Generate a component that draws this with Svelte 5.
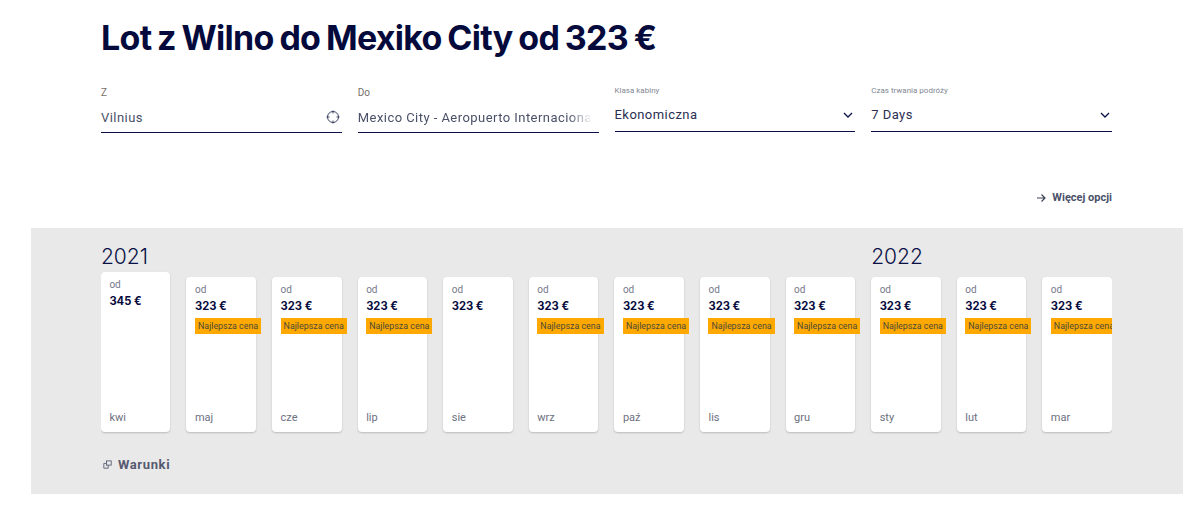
<script>
	const months = [
		{ name: 'kwi', price: 345, best: false, year: '2021' },
		{ name: 'maj', price: 323, best: true },
		{ name: 'cze', price: 323, best: true },
		{ name: 'lip', price: 323, best: true },
		{ name: 'sie', price: 323, best: false },
		{ name: 'wrz', price: 323, best: true },
		{ name: 'paź', price: 323, best: true },
		{ name: 'lis', price: 323, best: true },
		{ name: 'gru', price: 323, best: true },
		{ name: 'sty', price: 323, best: true, year: '2022' },
		{ name: 'lut', price: 323, best: true },
		{ name: 'mar', price: 323, best: true }
	];
</script>

<main class="page">
	<h1 class="title">Lot z Wilno do Mexiko City od 323 €</h1>

	<div class="filters">
		<div class="field text-field">
			<span class="label">Z</span>
			<div class="value muted">
				<span>Vilnius</span>
				<svg class="locate" width="14" height="14" viewBox="0 0 14 14" fill="none" stroke="#2c3357" stroke-width="0.9">
					<circle cx="7" cy="7" r="5.5" />
					<path d="M7 0.5v3M7 10.5v3M0.5 7h3M10.5 7h3" />
				</svg>
			</div>
		</div>
		<div class="field text-field">
			<span class="label">Do</span>
			<div class="value muted">
				<span class="fade">Mexico City - Aeropuerto Internacional</span>
			</div>
		</div>
		<div class="field select-field">
			<span class="label small">Klasa kabiny</span>
			<div class="value">
				<span>Ekonomiczna</span>
				<svg width="10" height="6" viewBox="0 0 10 6" fill="none" stroke="#0a1147" stroke-width="1.3">
					<path d="M1 1l4 4 4-4" />
				</svg>
			</div>
		</div>
		<div class="field select-field">
			<span class="label small">Czas trwania podróży</span>
			<div class="value">
				<span>7 Days</span>
				<svg width="10" height="6" viewBox="0 0 10 6" fill="none" stroke="#0a1147" stroke-width="1.3">
					<path d="M1 1l4 4 4-4" />
				</svg>
			</div>
		</div>
	</div>

	<div class="more">
		<svg width="10" height="10" viewBox="0 0 10 10" fill="none" stroke="#3c4258" stroke-width="1.2">
			<path d="M1 5h8M5.5 1.5L9 5 5.5 8.5" />
		</svg>
		<span>Więcej opcji</span>
	</div>

	<section class="band">
		<div class="calendar">
			{#each months as m}
				<div class="column">
					<div class="year">{m.year ?? ''}</div>
					<div class="card" class:first={m.year === '2021'}>
						<span class="od">od</span>
						<strong class="price">{m.price} €</strong>
						{#if m.best}
							<span class="badge">Najlepsza cena</span>
						{/if}
						<span class="month">{m.name}</span>
					</div>
				</div>
			{/each}
		</div>
		<div class="terms">
			<svg width="9" height="9" viewBox="0 0 9 9" fill="none" stroke="#4a5068" stroke-width="0.8">
				<rect x="3.4" y="0.9" width="4.8" height="4.2" />
				<path d="M3.4 3.4H0.8v4.8h4.4V5.1" />
			</svg>
			<span>Warunki</span>
		</div>
	</section>
</main>

<style>
	:global(body) {
		margin: 0;
		background: #fff;
	}
	.page {
		width: 1202px;
		height: 505px;
		overflow: hidden;
		font-family: Roboto, sans-serif;
		color: #0a1147;
	}
	.title {
		margin: 0;
		padding: 17px 0 0 101px;
		font-family: Inter, sans-serif;
		font-size: 34px;
		line-height: 42px;
		font-weight: 700;
		letter-spacing: -0.7px;
		word-spacing: -1.7px;
		color: #050a3c;
	}
	.filters {
		display: grid;
		grid-template-columns: repeat(4, minmax(0, 1fr));
		gap: 16px;
		width: 1011px;
		margin: 28px 0 0 101px;
		align-items: start;
	}
	.field {
		display: flex;
		flex-direction: column;
		min-width: 0;
	}
	.label {
		font-size: 10px;
		line-height: 12px;
		color: #77706a;
	}
	.label.small {
		font-size: 8px;
		color: #7f8894;
	}
	.text-field .value {
		margin-top: 8px;
		height: 26px;
	}
	.select-field {
		margin-top: -2px;
	}
	.select-field .value {
		margin-top: 6px;
		height: 29px;
	}
	.value {
		display: flex;
		align-items: center;
		justify-content: space-between;
		box-sizing: border-box;
		padding: 0 2px 5px 0;
		border-bottom: 1px solid #0a1147;
		font-size: 13px;
		letter-spacing: 0.45px;
		color: #2b2f52;
	}
	.value.muted {
		color: #4a5068;
	}
	.fade {
		white-space: nowrap;
		overflow: hidden;
		width: 100%;
		margin-right: 5px;
		-webkit-mask-image: linear-gradient(to right, #000 90%, transparent);
		mask-image: linear-gradient(to right, #000 90%, transparent);
	}
	.more {
		display: flex;
		justify-content: flex-end;
		align-items: center;
		gap: 6px;
		width: 1011px;
		margin: 57px 0 0 101px;
		font-size: 11px;
		line-height: 16px;
		font-weight: 700;
		color: #4a5068;
	}
	.band {
		width: 1152px;
		height: 266px;
		margin: 22px 0 0 31px;
		box-sizing: border-box;
		padding: 16px 0 0 69.9px;
		background: #e9e9e9;
	}
	.calendar {
		display: grid;
		grid-template-columns: repeat(12, minmax(0, 1fr));
		gap: 16px;
		width: 1011px;
		overflow: hidden;
		padding-bottom: 4px;
	}
	.column {
		min-width: 0;
	}
	.year {
		height: 33px;
		font-family: Inter, sans-serif;
		font-size: 21px;
		line-height: 26px;
		font-weight: 300;
		white-space: nowrap;
		color: #0a1147;
	}
	.card {
		display: flex;
		flex-direction: column;
		box-sizing: border-box;
		height: 155px;
		padding: 6px 8px 0 8.5px;
		background: #fff;
		border-radius: 4px;
		box-shadow: 0 1px 2px rgba(0, 0, 0, 0.2);
	}
	.card.first {
		margin-top: -5px;
		height: 160px;
	}
	.od {
		font-size: 10px;
		line-height: 14px;
		color: #77798a;
	}
	.price {
		margin-top: 1px;
		font-family: Inter, sans-serif;
		font-size: 11.2px;
		line-height: 16px;
		font-weight: 700;
		white-space: nowrap;
		color: #050a3c;
	}
	.badge {
		align-self: flex-start;
		margin-top: 4px;
		padding: 0 3px;
		font-size: 8.9px;
		line-height: 16px;
		white-space: nowrap;
		background: #ffa900;
		color: #4a4a3a;
	}
	.month {
		margin-top: auto;
		padding-bottom: 7px;
		font-size: 11px;
		line-height: 14px;
		color: #6d7080;
	}
	.terms {
		display: flex;
		align-items: center;
		gap: 6px;
		margin-top: 21px;
		padding-left: 2px;
		font-size: 13px;
		line-height: 16px;
		font-weight: 700;
		letter-spacing: 0.65px;
		color: #555a70;
	}
	.terms svg {
		margin-top: -2px;
	}
</style>
